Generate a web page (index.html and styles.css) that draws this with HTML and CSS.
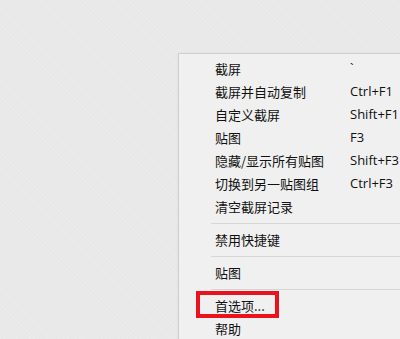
FILE: index.html
```html
<!DOCTYPE html>
<html lang="zh-CN">
<head>
    <meta charset="UTF-8">
    <title>截图菜单</title>
    <link rel="stylesheet" href="styles.css">
</head>
<body>
    <div class="menu">
        <div class="item"><span>截屏</span><span class="key">`</span></div>
        <div class="item"><span>截屏并自动复制</span><span class="key">Ctrl+F1</span></div>
        <div class="item"><span>自定义截屏</span><span class="key">Shift+F1</span></div>
        <div class="item"><span>贴图</span><span class="key">F3</span></div>
        <div class="item"><span>隐藏/显示所有贴图</span><span class="key">Shift+F3</span></div>
        <div class="item"><span>切换到另一贴图组</span><span class="key">Ctrl+F3</span></div>
        <div class="item"><span>清空截屏记录</span><span class="key"></span></div>
        <div class="sep"></div>
        <div class="item"><span>禁用快捷键</span><span class="key"></span></div>
        <div class="sep"></div>
        <div class="item"><span>贴图</span><span class="key"></span></div>
        <div class="sep"></div>
        <div class="item"><span>首选项...</span><span class="key"></span></div>
        <div class="item"><span>帮助</span><span class="key"></span></div>
    </div>
    <div class="highlight"></div>
</body>
</html>
```

FILE: styles.css
```css
body {
    margin: 0;
    width: 400px;
    height: 339px;
    overflow: hidden;
    background-color: #e8e8e8;
    background-image: repeating-linear-gradient(45deg, rgba(255, 255, 255, 0.12) 0 1px, transparent 1px 3px);
    font-family: "Open Sans", "Noto Sans CJK SC", sans-serif;
    font-size: 13px;
    color: #111;
}

.menu {
    position: absolute;
    left: 178px;
    top: 53px;
    width: 240px;
    padding-top: 3px;
    background-color: #f0f0f0;
    border: 1px solid #cfcfcf;
    box-shadow: 1px 1px 3px rgba(0, 0, 0, 0.12);
}

.item {
    display: grid;
    grid-template-columns: 135px auto;
    align-items: center;
    height: 23px;
    padding-left: 36px;
    white-space: nowrap;
}

.item span {
    font-family: "Noto Sans CJK SC", sans-serif;
    line-height: 23px;
}

.item .key {
    font-family: "Open Sans", sans-serif;
}

.sep {
    height: 10px;
    margin-left: 32px;
    position: relative;
}

.sep::after {
    content: "";
    display: block;
    position: absolute;
    left: 0;
    right: 0;
    top: 5px;
    border-top: 1px solid #d7d7d7;
}

.highlight {
    position: absolute;
    left: 196px;
    top: 291px;
    width: 75px;
    height: 19px;
    border: 4px solid #e8131f;
}
```
